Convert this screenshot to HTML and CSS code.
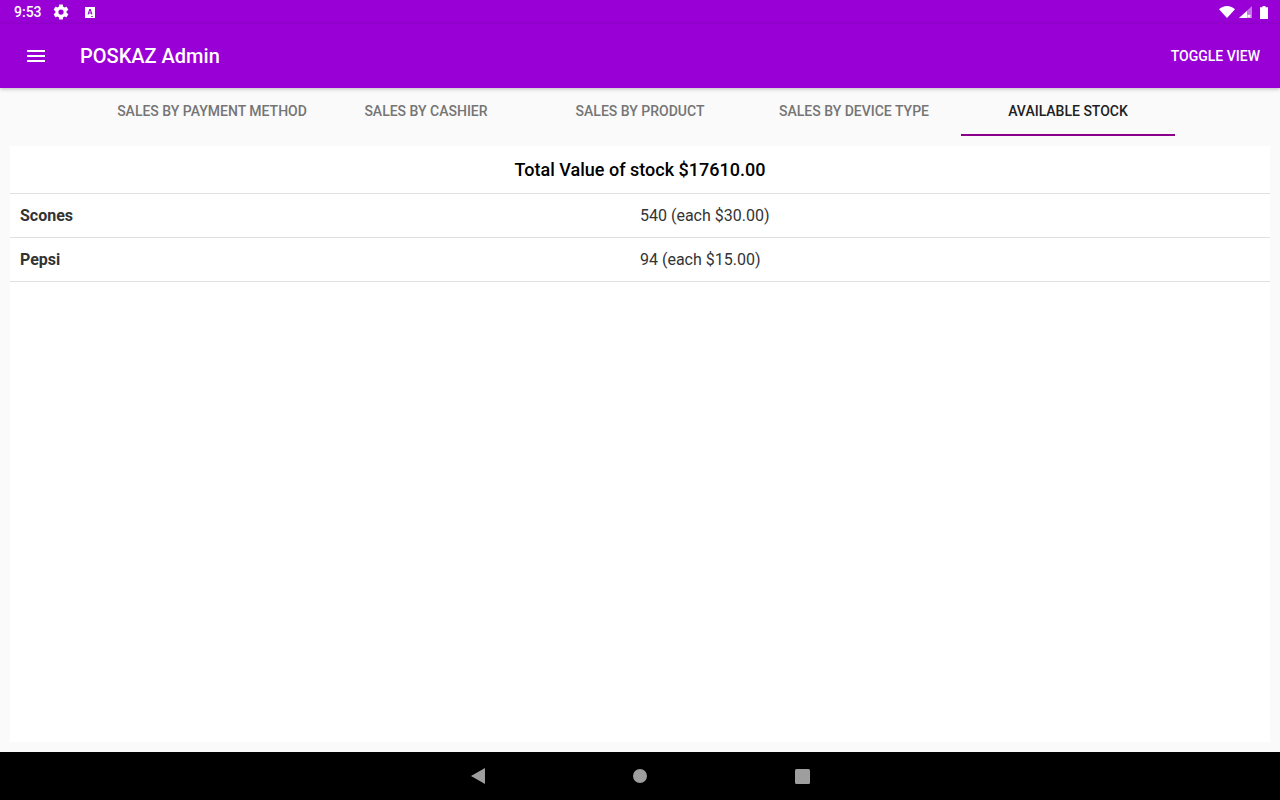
FILE: index.html
```html
<!DOCTYPE html>
<html lang="en">
<head>
    <meta charset="UTF-8">
    <title>POSKAZ Admin</title>
    <link rel="stylesheet" href="styles.css">
</head>
<body>
    <div class="app">
        <div class="status-bar">
            <div class="status-left">
                <span class="clock">9:53</span>
                <svg class="gear-icon" viewBox="0 0 24 24" width="18" height="18"><path fill="#fff" d="M19.4 13c.04-.33.1-.66.1-1s-.06-.67-.1-1l2.1-1.65c.2-.15.25-.42.13-.64l-2-3.46c-.12-.22-.39-.3-.61-.22l-2.49 1c-.52-.4-1.08-.73-1.69-.98l-.38-2.65A.49.49 0 0 0 14 2h-4c-.25 0-.46.18-.49.42l-.38 2.65c-.61.25-1.17.59-1.69.98l-2.49-1c-.23-.09-.49 0-.61.22l-2 3.46c-.13.22-.07.49.12.64L4.57 11c-.04.33-.07.66-.07 1s.03.67.07 1l-2.11 1.65c-.19.15-.25.42-.12.64l2 3.46c.12.22.39.3.61.22l2.49-1c.52.4 1.08.73 1.69.98l.38 2.65c.03.24.24.42.49.42h4c.25 0 .46-.18.49-.42l.38-2.65c.61-.25 1.17-.59 1.69-.98l2.49 1c.23.09.49 0 .61-.22l2-3.46c.12-.22.07-.49-.13-.64L19.4 13zM12 15.5a3.5 3.5 0 1 1 0-7 3.5 3.5 0 0 1 0 7z"/></svg>
                <svg class="store-icon" viewBox="0 0 10 11" width="10" height="11"><path fill="#fff" fill-rule="evenodd" d="M0 0h10v11H0zM4.3 2 2.5 7.5h1.1l.35-1.1h2.1l.35 1.1h1.1L5.7 2zM5 3.4l.75 2.2h-1.5zM6 9v.7h2V9z"/></svg>
            </div>
            <div class="status-right">
                <svg viewBox="0 0 16 12" width="16" height="12"><path fill="#fff" d="M0 3.2C2 1.3 4.8 0 8 0s6 1.3 8 3.2L8 12z"/></svg>
                <svg viewBox="0 0 13 12" width="13" height="12"><path fill="#fff" opacity=".45" d="M13 0v12H0z"/><path fill="#fff" d="M8 5v7H0zM9 8.5l1 1 1-1 .8.8-1 1 1 1-.8.7-1-1-1 1-.5-.5V8.900z"/></svg>
                <svg class="battery-icon" viewBox="0 0 8 13" width="8" height="13"><path fill="#fff" d="M2.500 0h3v1.200H8V13H0V1.200h2.500z"/></svg>
            </div>
        </div>

        <header class="toolbar">
            <div class="toolbar-left">
                <svg class="menu-icon" viewBox="0 0 18 12" width="18" height="12"><path fill="#fff" d="M0 0h18v2H0zM0 5h18v2H0zM0 10h18v2H0z"/></svg>
                <h1 class="toolbar-title">POSKAZ Admin</h1>
            </div>
            <button class="toggle-btn">Toggle View</button>
        </header>

        <nav class="tabs">
            <a class="tab">Sales by payment method</a>
            <a class="tab">Sales by cashier</a>
            <a class="tab">Sales by product</a>
            <a class="tab">Sales by device type</a>
            <a class="tab tab-active">Available stock</a>
        </nav>

        <main class="content">
            <div class="stock-card">
                <h2 class="stock-total">Total Value of stock $17610.00</h2>
                <div class="stock-row">
                    <span class="stock-name">Scones</span>
                    <span class="stock-qty">540 (each $30.00)</span>
                </div>
                <div class="stock-row">
                    <span class="stock-name">Pepsi</span>
                    <span class="stock-qty">94 (each $15.00)</span>
                </div>
            </div>
        </main>

        <footer class="nav-bar">
            <svg viewBox="0 0 14 16" width="14" height="16"><path fill="#9e9e9e" d="M14 0v16L0 8z"/></svg>
            <svg viewBox="0 0 14 14" width="14" height="14"><circle fill="#9e9e9e" cx="7" cy="7" r="7"/></svg>
            <svg viewBox="0 0 15 15" width="15" height="15"><rect fill="#9e9e9e" width="15" height="15" rx="1.500"/></svg>
        </footer>
    </div>
</body>
</html>
```

FILE: styles.css
```css
* {
    box-sizing: border-box;
    margin: 0;
    padding: 0;
}
body {
    font-family: Roboto, "Liberation Sans", sans-serif;
    background-color: #fafafa;
}
.app {
    width: 1280px;
    height: 800px;
    display: flex;
    flex-direction: column;
    overflow: hidden;
}
.status-bar {
    height: 24px;
    padding: 0 12px 0 14px;
    display: flex;
    justify-content: space-between;
    align-items: center;
    background-color: #9800d6;
    color: #fff;
}
.status-left {
    display: flex;
    align-items: center;
}
.clock {
    font-size: 14px;
    font-weight: 500;
    width: 38px;
}
.gear-icon {
    margin-right: 15px;
}
.status-right {
    display: flex;
    align-items: center;
    gap: 4px;
}
.battery-icon {
    margin-left: 4px;
}
.toolbar {
    height: 64px;
    padding: 0 20px 0 27px;
    display: flex;
    justify-content: space-between;
    align-items: center;
    background-color: #9800d6;
    box-shadow: 0 1px 4px rgba(0, 0, 0, 0.25);
    position: relative;
}
.toolbar-left {
    display: flex;
    align-items: center;
}
.toolbar-title {
    margin-left: 35px;
    font-size: 20px;
    font-weight: 500;
    color: #fff;
}
.toggle-btn {
    border: none;
    background-color: transparent;
    color: #fff;
    font-family: inherit;
    font-size: 14px;
    font-weight: 500;
    text-transform: uppercase;
}
.tabs {
    height: 48px;
    display: flex;
    justify-content: center;
}
.tab {
    width: 214px;
    height: 48px;
    padding-bottom: 1px;
    display: flex;
    justify-content: center;
    align-items: center;
    font-size: 14px;
    font-weight: 500;
    text-transform: uppercase;
    color: #757575;
    border-bottom: 2px solid transparent;
}
.tab-active {
    color: #212121;
    border-bottom-color: #8b008b;
}
.content {
    flex: 1;
    padding: 10px 10px 10px;
}
.stock-card {
    height: 100%;
    background-color: #fff;
}
.stock-total {
    height: 48px;
    display: flex;
    justify-content: center;
    align-items: center;
    font-size: 18px;
    font-weight: 500;
    color: #000;
    border-bottom: 1px solid #e0e0e0;
}
.stock-row {
    height: 44px;
    padding: 0 10px;
    display: grid;
    grid-template-columns: 50% 50%;
    align-items: center;
    font-size: 16px;
    color: #333;
    border-bottom: 1px solid #e0e0e0;
}
.stock-name {
    font-weight: 700;
}
.stock-qty {
    padding-left: 0;
}
.nav-bar {
    height: 48px;
    display: grid;
    grid-template-columns: 1fr 1fr 1fr;
    width: 486px;
    margin: 0 auto;
    justify-items: center;
    align-items: center;
    position: relative;
}
.nav-bar::before {
    content: "";
    position: absolute;
    top: 0;
    bottom: 0;
    left: -397px;
    width: 1280px;
    background-color: #000;
}
.nav-bar svg {
    position: relative;
}
```
